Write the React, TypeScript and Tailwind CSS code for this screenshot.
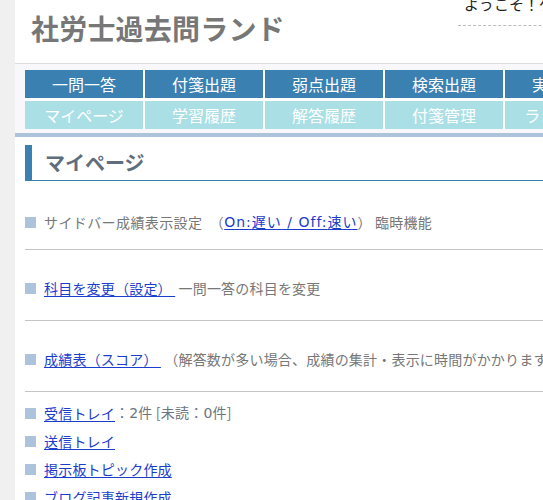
import React from "react";

const topNav = ["一問一答", "付箋出題", "弱点出題", "検索出題", "実戦出題", "模擬試験", "統計情報", "掲示板"];
const subNav = ["マイページ", "学習履歴", "解答履歴", "付箋管理", "ランキング", "ブログ", "お知らせ", "ヘルプ"];

function Bullet() {
  return <span className="mr-2 inline-block h-[11px] w-[11px] shrink-0 bg-[#adc3dc]" />;
}

function Link({ children, className = "" }: { children: React.ReactNode; className?: string }) {
  return (
    <a href="#" className={`text-[#1b3dcc] underline underline-offset-2 ${className}`}>
      {children}
    </a>
  );
}

function Latin({ children }: { children: React.ReactNode }) {
  return <span className="font-['DejaVu_Sans']">{children}</span>;
}

function Row({ children, className = "" }: { children: React.ReactNode; className?: string }) {
  return <div className={`flex h-7 items-center whitespace-nowrap ${className}`}>{children}</div>;
}

export default function App() {
  return (
    <div
      className="h-[500px] w-full overflow-hidden bg-[#f0f0f0] text-[#777]"
      style={{ fontFamily: '"Noto Sans CJK JP", "Noto Sans", sans-serif' }}
    >
      <div className="ml-[15px] min-h-full w-[1000px] bg-white">
        {/* Header */}
        <div className="flex h-16 border-b border-[#dcdcdc]">
          <div className="w-[443px] shrink-0 pl-4 pt-[14px]">
            <h1 className="text-[28px] font-bold leading-none tracking-[0.2px] text-[#777]">社労士過去問ランド</h1>
          </div>
          <div className="w-[300px]">
            <div className="mt-[-7px] border-b border-dashed border-[#bbb] pb-[10px] pl-[6px] text-[15px] leading-[22px] text-[#222]">
              ようこそ！ゲストさん
            </div>
          </div>
        </div>

        {/* Navigation */}
        <div className="bg-[#f7f7fc] px-[10px] pb-1 pt-[6px]">
          <div className="grid w-max grid-cols-[repeat(8,118px)] gap-x-[2px] gap-y-[3px] bg-white">
            {topNav.map((label) => (
              <div key={label} className="flex h-7 items-center justify-center bg-[#3a80b1] text-[16px] text-white">
                {label}
              </div>
            ))}
            {subNav.map((label) => (
              <div key={label} className="flex h-7 items-center justify-center bg-[#a9dfe5] text-[16px] text-white">
                {label}
              </div>
            ))}
          </div>
        </div>
        <div className="h-1 bg-[#adc3dc]" />

        {/* Content */}
        <div className="px-[10px] pt-2 text-[14px] tracking-[0.2px]">
          <h2 className="flex h-9 items-center border-b border-l-[7px] border-b-[#3a80b1] border-l-[#3a80b1] pl-[13px] text-[20px] font-bold tracking-normal text-[#5f6e7c]">
            マイページ
          </h2>

          <Row className="mt-[27px]">
            <Bullet />
            <span className="tracking-[0.4px]">サイドバー成績表示設定　（</span>
            <Link className="tracking-[1px]">
              <Latin>On:</Latin>遅い<Latin> / Off:</Latin>速い
            </Link>
            <span>）&nbsp;臨時機能</span>
          </Row>
          <div className="mt-[13px] h-px bg-[#c4c4c4]" />

          <Row className="mt-6">
            <Bullet />
            <Link>科目を変更（設定）&nbsp;</Link>
            <span>&nbsp;一問一答の科目を変更</span>
          </Row>
          <div className="mt-[18px] h-px bg-[#c4c4c4]" />

          <Row className="mt-6">
            <Bullet />
            <Link>成績表（スコア）&nbsp;</Link>
            <span>&nbsp;（解答数が多い場合、成績の集計・表示に時間がかかります）</span>
          </Row>
          <div className="mt-[18px] h-px bg-[#c4c4c4]" />

          <div className="mt-[7px]">
            <Row>
              <Bullet />
              <Link>受信トレイ</Link>
              <span className="text-[#6b7580]">
                ：<Latin>2</Latin>件 [未読：<Latin>0</Latin>件]
              </span>
            </Row>
            <Row>
              <Bullet />
              <Link>送信トレイ</Link>
            </Row>
            <Row>
              <Bullet />
              <Link>掲示板トピック作成</Link>
            </Row>
            <Row>
              <Bullet />
              <Link>ブログ記事新規作成</Link>
            </Row>
          </div>
        </div>
      </div>
    </div>
  );
}
